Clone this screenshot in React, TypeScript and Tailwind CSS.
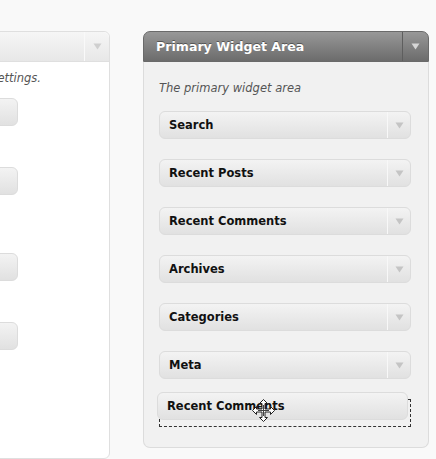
import React from "react";

const font = { fontFamily: '"DejaVu Sans", Verdana, sans-serif' };

function Arrow({ color }: { color: string }) {
  return (
    <svg width="9" height="7" viewBox="0 0 9 7">
      <path d="M0.5 0.5 H8.5 L4.5 6.5 Z" fill={color} />
    </svg>
  );
}

function Widget({ title }: { title: string }) {
  return (
    <div className="flex h-[28px] w-[252px] rounded-[6px] border border-[#dcdcdc] bg-gradient-to-b from-[#f3f3f3] to-[#e1e1e1]">
      <div className="flex flex-1 items-center pl-[9px] pt-[2px] text-[11.5px] font-bold text-[#111]">{title}</div>
      <div className="flex w-[23px] items-center justify-center border-l border-[#f8f8f8]">
        <Arrow color="#c4c4c4" />
      </div>
    </div>
  );
}

function LeftStub({ mt }: { mt: string }) {
  return (
    <div
      className={`${mt} ml-[100px] h-[28px] w-[117px] rounded-r-[6px] border border-[#dcdcdc] bg-gradient-to-b from-[#f3f3f3] to-[#e1e1e1]`}
    />
  );
}

function MoveCursor() {
  return (
    <svg width="23" height="23" viewBox="0 0 23 23">
      <path
        d="M11.5 0.5 L15.5 4.5 L13 4.5 L13 10 L18.5 10 L18.5 7.5 L22.5 11.5 L18.5 15.5 L18.5 13 L13 13 L13 18.5 L15.5 18.5 L11.5 22.5 L7.5 18.5 L10 18.5 L10 13 L4.5 13 L4.5 15.5 L0.5 11.5 L4.5 7.5 L4.5 10 L10 10 L10 4.5 L7.5 4.5 Z"
        fill="#ffffff"
        stroke="#222"
        strokeWidth="1"
        strokeLinejoin="miter"
      />
      <path d="M11.5 6 V17 M6 11.5 H17" stroke="#444" strokeWidth="1" />
    </svg>
  );
}

export default function App() {
  const items = ["Search", "Recent Posts", "Recent Comments", "Archives", "Categories", "Meta"];
  return (
    <div className="flex h-[459px] w-[436px] items-start overflow-hidden bg-[#f9f9f9] pt-[31px]" style={font}>
      {/* Left panel */}
      <div className="ml-[-200px] flex h-[428px] w-[310px] shrink-0 flex-col rounded-r-[6px] border border-[#dfdfdf] bg-white">
        <div className="flex h-[30px] rounded-tr-[6px] border-b border-[#dfdfdf] bg-gradient-to-b from-[#f6f6f6] to-[#e7e7e7]">
          <div className="flex-1" />
          <div className="flex w-[25px] items-center justify-center border-l border-[#f9f9f9]">
            <Arrow color="#cfcfcf" />
          </div>
        </div>
        <div className="pr-[68px] pt-[8px] text-right text-[11.5px] italic leading-[16px] text-[#555] whitespace-nowrap">
          delete their settings.
        </div>
        <LeftStub mt="mt-[12px]" />
        <LeftStub mt="mt-[41px]" />
        <LeftStub mt="mt-[58px]" />
        <LeftStub mt="mt-[41px]" />
      </div>

      {/* Right panel */}
      <div className="ml-[33px] flex w-[286px] shrink-0 flex-col">
        <div className="flex h-[31px] rounded-t-[7px] border border-[#6a6a6a] bg-gradient-to-b from-[#989898] to-[#6c6c6c]">
          <div className="flex flex-1 items-center pl-[12px] pt-[2px] text-[12.6px] font-bold text-white [text-shadow:0_-1px_0_#555]">
            Primary Widget Area
          </div>
          <div className="flex w-[26px] items-center justify-center border-l border-[#5e5e5e]">
            <Arrow color="#d6d6d6" />
          </div>
        </div>
        <div className="flex flex-col rounded-b-[7px] border border-t-0 border-[#dcdcdc] bg-[#f1f1f1] px-[15px] pb-[20px] pt-[18px]">
          <div className="text-[11.5px] italic leading-[16px] text-[#555]">The primary widget area</div>
          <div className="mt-[15px] flex flex-col gap-[20px]">
            {items.map((t) => (
              <Widget key={t} title={t} />
            ))}
            <div className="relative h-[28px] w-[252px] border border-dashed border-[#333]">
              <div className="absolute left-[-3px] top-[-8px] flex h-[28px] w-[251px] items-center rounded-[6px] border border-[#dcdcdc] bg-gradient-to-b from-[#f3f3f3] to-[#e1e1e1] pl-[9px] pt-[2px] text-[11.5px] font-bold text-[#111]">
                Recent Comments
              </div>
              <div className="absolute left-[92px] top-[-1px]">
                <MoveCursor />
              </div>
            </div>
          </div>
        </div>
      </div>
    </div>
  );
}
